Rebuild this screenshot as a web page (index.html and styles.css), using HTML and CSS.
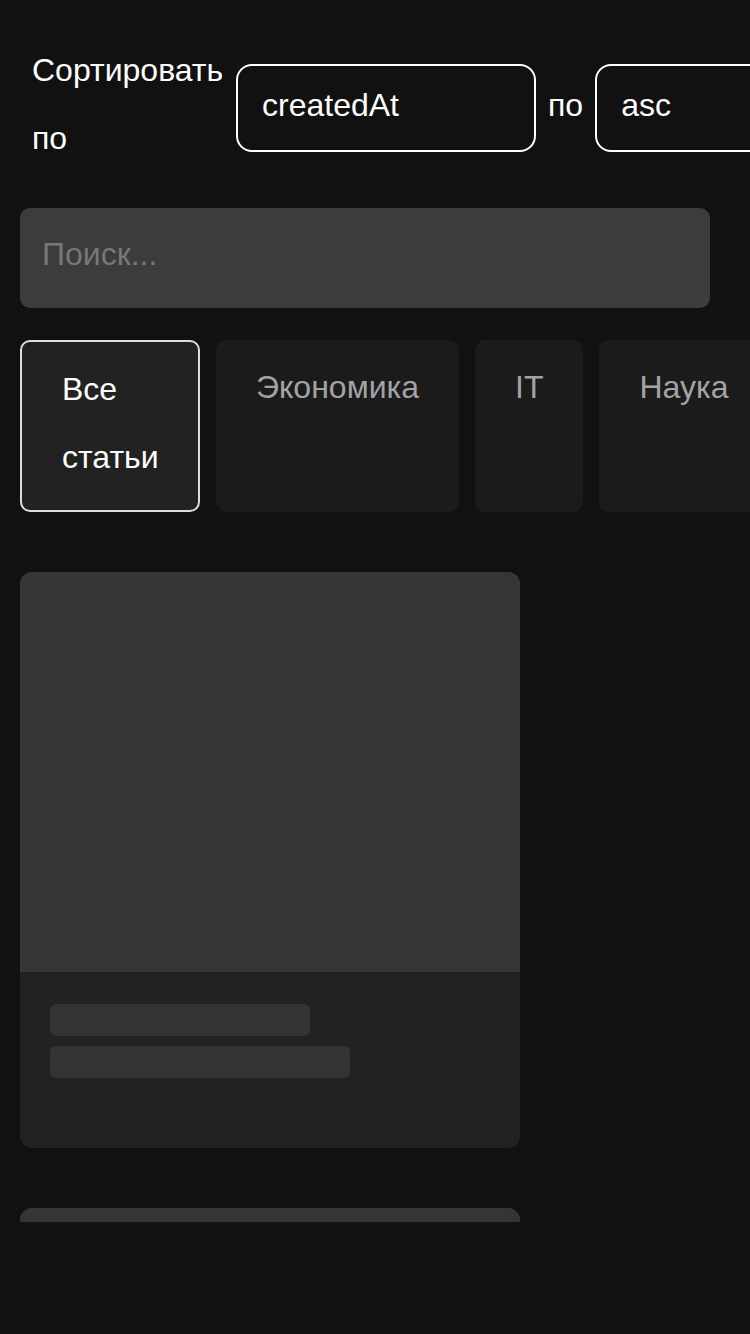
FILE: index.html
```html
<!DOCTYPE html>
<html lang="ru">
<head>
<meta charset="utf-8">
<link rel="stylesheet" href="styles.css">
</head>
<body>
<div class="viewport">
  <div class="page">
    <div class="sort">
      <div class="sort-label">Сортировать по</div>
      <div class="select select-field">createdAt</div>
      <div class="sort-sep">по</div>
      <div class="select select-order">asc</div>
    </div>
    <div class="search">Поиск...</div>
    <div class="tabs">
      <div class="tab tab-active">Все статьи</div>
      <div class="tab">Экономика</div>
      <div class="tab">IT</div>
      <div class="tab">Наука</div>
    </div>
    <div class="list">
      <div class="card">
        <div class="card-img"></div>
        <div class="card-body">
          <div class="skel skel-1"></div>
          <div class="skel skel-2"></div>
        </div>
      </div>
      <div class="card">
        <div class="card-img"></div>
        <div class="card-body">
          <div class="skel skel-1"></div>
          <div class="skel skel-2"></div>
        </div>
      </div>
    </div>
  </div>
</div>
</body>
</html>
```
FILE: styles.css
```css
html, body {
  margin: 0;
  padding: 0;
  background: #111111;
  overflow: hidden;
  width: 750px;
  height: 1334px;
}
body {
  font-family: "Liberation Sans", Arial, sans-serif;
  font-size: 32px;
  color: #ffffff;
}
.viewport {
  height: 1222px;
  overflow: hidden;
}
.page {
  padding: 0 20px;
}
.sort {
  display: flex;
  align-items: flex-start;
  gap: 12px;
  padding: 36px 12px 0 12px;
  white-space: nowrap;
}
.sort-label {
  width: 192px;
  white-space: normal;
  line-height: 68px;
  flex-shrink: 0;
}
.select {
  flex-shrink: 0;
  width: 300px;
  height: 88px;
  box-sizing: border-box;
  border: 2px solid #ffffff;
  border-radius: 16px;
  padding: 0 24px;
  line-height: 78px;
  margin-top: 28px;
  color: #ffffff;
}
.sort-sep {
  line-height: 68px;
  margin-top: 35px;
  flex-shrink: 0;
}
.search {
  margin-top: 36px;
  width: 690px;
  height: 100px;
  box-sizing: border-box;
  background: #3c3c3c;
  border-radius: 10px;
  padding: 0 22px;
  line-height: 92px;
  color: #777777;
}
.tabs {
  margin-top: 32px;
  display: flex;
  gap: 16px;
  white-space: nowrap;
}
.tab {
  flex-shrink: 0;
  box-sizing: border-box;
  height: 172px;
  padding: 18px 40px;
  line-height: 58px;
  background: #1b1b1b;
  border-radius: 10px;
  color: #a3a3a3;
}
.tab-active {
  width: 180px;
  white-space: normal;
  padding: 13px 38px 0 40px;
  line-height: 68px;
  border: 2px solid #dddddd;
  background: #222222;
  color: #ffffff;
}
.list {
  margin-top: 60px;
  display: flex;
  flex-direction: column;
  gap: 60px;
}
.card {
  width: 500px;
  border-radius: 12px;
  overflow: hidden;
  background: #222222;
  flex-shrink: 0;
}
.card-img {
  height: 400px;
  background: #353535;
}
.card-body {
  height: 176px;
  box-sizing: border-box;
  padding: 32px 30px;
  display: flex;
  flex-direction: column;
  gap: 10px;
}
.skel {
  height: 32px;
  border-radius: 6px;
  background: #333333;
}
.skel-1 { width: 260px; }
.skel-2 { width: 300px; }
```
